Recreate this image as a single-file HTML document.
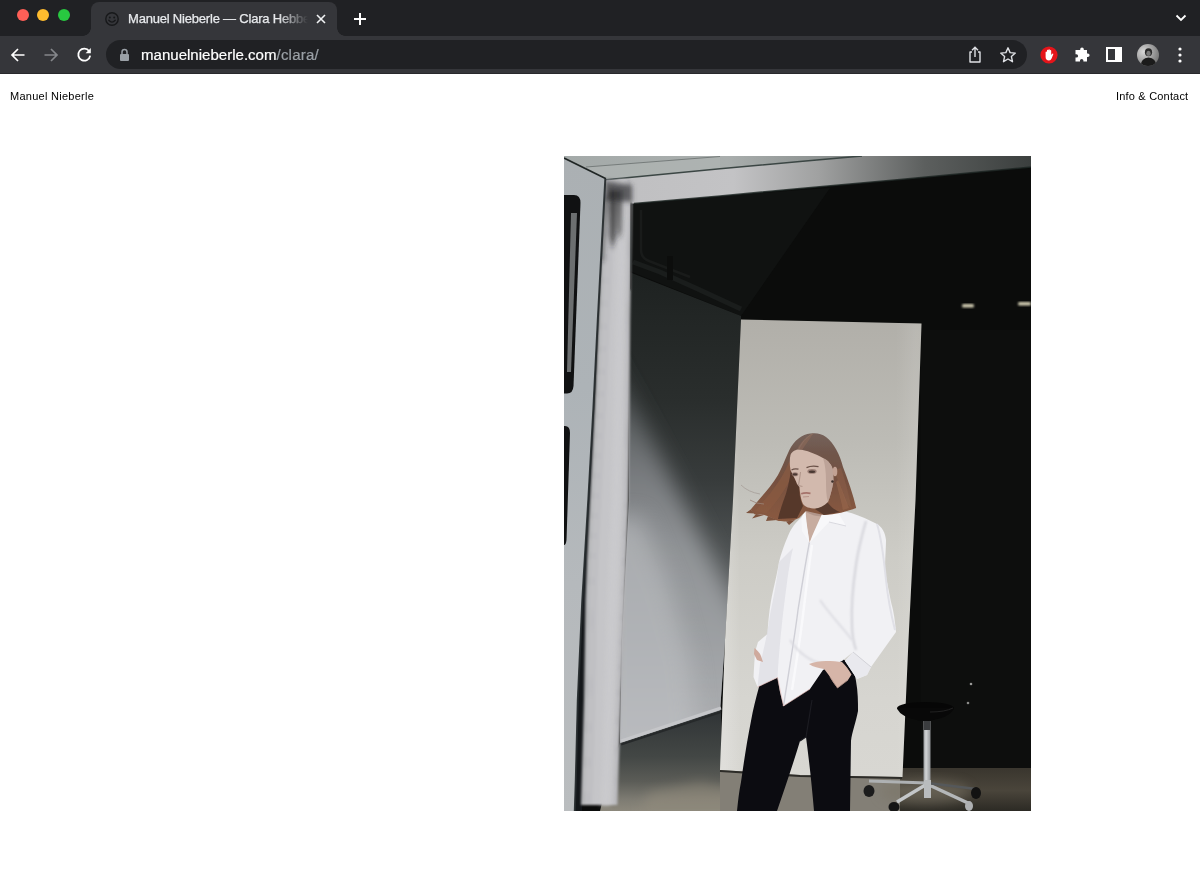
<!DOCTYPE html>
<html lang="en">
<head>
<meta charset="utf-8">
<title>Manuel Nieberle — Clara Hebbel</title>
<style>
html,body{margin:0;padding:0;}
body{width:1200px;height:887px;overflow:hidden;background:#fff;position:relative;font-family:"Liberation Sans",sans-serif;}
#tabstrip{position:absolute;left:0;top:0;width:1200px;height:36px;background:#202124;}
#toolbar{position:absolute;left:0;top:36px;width:1200px;height:37px;background:#35363a;}
#tbline{position:absolute;left:0;top:72.5px;width:1200px;height:1px;background:#28292c;}
.tl{position:absolute;top:9px;width:12px;height:12px;border-radius:50%;}
#tab{position:absolute;left:91px;top:2px;width:246px;height:34px;background:#35363a;border-radius:8px 8px 0 0;}
#tab:before,#tab:after{content:"";position:absolute;bottom:0;width:8px;height:8px;}
#tab:before{left:-8px;background:radial-gradient(circle at 0 0,rgba(0,0,0,0) 7.5px,#35363a 8px);}
#tab:after{right:-8px;background:radial-gradient(circle at 100% 0,rgba(0,0,0,0) 7.5px,#35363a 8px);}
#tabtitle{position:absolute;left:37px;top:8px;width:180px;height:18px;line-height:18px;font-size:13px;color:#e8eaed;white-space:nowrap;overflow:hidden;letter-spacing:-0.2px;-webkit-text-stroke:0.25px #e8eaed;
-webkit-mask-image:linear-gradient(90deg,#000 150px,rgba(0,0,0,0) 180px);mask-image:linear-gradient(90deg,#000 150px,rgba(0,0,0,0) 180px);}
#omni{position:absolute;left:106px;top:40px;width:921px;height:29px;border-radius:15px;background:#202124;}
#url{position:absolute;left:35px;top:4px;height:21px;line-height:21px;font-size:15.05px;color:#fff;white-space:nowrap;-webkit-text-stroke:0.2px #fff;}
#url span{color:#9aa0a6;letter-spacing:0.2px;-webkit-text-stroke:0.2px #9aa0a6;}
svg.ic{position:absolute;overflow:visible;}
#site-l,#site-r,#url,#tabtitle{will-change:transform;}
#site-l{position:absolute;left:10px;top:89px;font-size:11px;letter-spacing:0.27px;line-height:14px;color:#000;white-space:nowrap;}
#site-r{position:absolute;right:11.6px;top:89px;font-size:11px;letter-spacing:0.19px;line-height:14px;color:#000;white-space:nowrap;}
#photo{position:absolute;left:564px;top:156px;width:467px;height:655px;overflow:hidden;}
</style>
</head>
<body>
<div id="tabstrip">
  <div class="tl" style="left:17px;background:#fe5f57;"></div>
  <div class="tl" style="left:37px;background:#febc2e;"></div>
  <div class="tl" style="left:58px;background:#28c840;"></div>
  <div id="tab">
    <svg class="ic" style="left:13px;top:9px" width="16" height="16" viewBox="0 0 16 16"><circle cx="8" cy="8" r="6.2" fill="none" stroke="#17181a" stroke-width="1.4"/><circle cx="5.8" cy="6.4" r="1" fill="#17181a"/><circle cx="10.2" cy="6.4" r="1" fill="#17181a"/><path d="M4.8 9.2 Q8 13 11.2 9.2" fill="none" stroke="#17181a" stroke-width="1.4" stroke-linecap="round"/></svg>
    <div id="tabtitle">Manuel Nieberle — Clara Hebbel</div>
    <svg class="ic" style="left:224px;top:11px" width="12" height="12" viewBox="0 0 12 12"><path d="M2 2 L10 10 M10 2 L2 10" stroke="#f1f3f4" stroke-width="1.6" fill="none"/></svg>
  </div>
  <svg class="ic" style="left:353px;top:12px" width="14" height="14" viewBox="0 0 14 14"><path d="M7 1 V13 M1 7 H13" stroke="#fff" stroke-width="2" fill="none"/></svg>
  <svg class="ic" style="left:1175px;top:14px" width="12" height="8" viewBox="0 0 12 8"><path d="M1.5 1.5 L6 6 L10.5 1.5" stroke="#fff" stroke-width="1.8" fill="none"/></svg>
</div>
<div id="toolbar"></div>
<div id="tbline"></div>
<!-- toolbar icons -->
<svg class="ic" style="left:10px;top:47px" width="16" height="16" viewBox="0 0 16 16"><path d="M14.5 8 H2.5 M8 2 L2 8 L8 14" stroke="#fff" stroke-width="1.7" fill="none"/></svg>
<svg class="ic" style="left:43px;top:47px" width="16" height="16" viewBox="0 0 16 16"><path d="M1.5 8 H13.5 M8 2 L14 8 L8 14" stroke="#85878b" stroke-width="1.7" fill="none"/></svg>
<svg class="ic" style="left:76px;top:46px" width="17" height="17" viewBox="0 0 17 17"><path d="M13.2 5.2 A6 6 0 1 0 14.2 9.6" stroke="#fff" stroke-width="1.8" fill="none"/><path d="M14.8 2 V7.2 H9.6 Z" fill="#fff"/></svg>
<div id="omni">
  <svg class="ic" style="left:13px;top:8px" width="11" height="14" viewBox="0 0 11 14"><rect x="1" y="6" width="9" height="7" rx="1" fill="#9aa0a6"/><path d="M3 6 V4 A2.5 2.5 0 0 1 8 4 V6" fill="none" stroke="#9aa0a6" stroke-width="1.5"/></svg>
  <div id="url">manuelnieberle.com<span>/clara/</span></div>
  <svg class="ic" style="left:862px;top:6px" width="14" height="18" viewBox="0 0 14 18"><path d="M4 6 H2 V16 H12 V6 H10" stroke="#dfe1e5" stroke-width="1.4" fill="none" stroke-linejoin="round"/><path d="M7 11 V1.5 M4 4.2 L7 1.2 L10 4.2" stroke="#dfe1e5" stroke-width="1.4" fill="none"/></svg>
  <svg class="ic" style="left:893px;top:6px" width="18" height="18" viewBox="0 0 18 18"><path d="M9 1.8 L11.1 6.6 L16.3 7.1 L12.4 10.6 L13.5 15.7 L9 13 L4.5 15.7 L5.6 10.6 L1.7 7.1 L6.9 6.6 Z" stroke="#dfe1e5" stroke-width="1.4" fill="none" stroke-linejoin="round"/></svg>
</div>
<svg class="ic" style="left:1040px;top:46px" width="18" height="18" viewBox="0 0 18 18"><circle cx="9" cy="9" r="8.6" fill="#e5141a"/><path d="M5.6 9.2 V6.2 Q5.6 5.4 6.3 5.4 Q7 5.4 7 6.2 V4.6 Q7 3.8 7.7 3.8 Q8.4 3.8 8.4 4.6 V4 Q8.4 3.2 9.1 3.2 Q9.8 3.2 9.8 4 V4.8 Q9.8 4 10.5 4 Q11.2 4 11.2 4.8 V9 L12.3 7.8 Q13 7.2 13.4 7.9 L11.6 12.4 Q10.8 14.4 9 14.4 Q5.6 14.4 5.6 11 Z" fill="#fff"/></svg>
<svg class="ic" style="left:1073px;top:46px" width="18" height="18" viewBox="0 0 18 18"><path d="M7.2 3.2 A1.8 1.8 0 0 1 10.8 3.2 V4 H14 V7.4 H14.8 A1.8 1.8 0 0 1 14.8 11 H14 V15.5 H10.4 V14.6 A1.7 1.7 0 0 0 7 14.6 V15.5 H2.5 V11.6 H3.4 A1.7 1.7 0 0 0 3.4 8.2 H2.5 V4 H7.2 Z" fill="#fff"/></svg>
<svg class="ic" style="left:1106px;top:47px" width="16" height="15" viewBox="0 0 16 15"><rect x="1" y="1" width="14" height="13" fill="none" stroke="#fff" stroke-width="2"/><rect x="9" y="1" width="6" height="13" fill="#fff"/></svg>
<svg class="ic" style="left:1137px;top:44px" width="22" height="22" viewBox="0 0 22 22"><defs><radialGradient id="av" cx="0.3" cy="0.35" r="0.8"><stop offset="0" stop-color="#d8d8d8"/><stop offset="1" stop-color="#6f6f6f"/></radialGradient><clipPath id="avc"><circle cx="11" cy="11" r="11"/></clipPath></defs><circle cx="11" cy="11" r="11" fill="url(#av)"/><g clip-path="url(#avc)"><ellipse cx="11.5" cy="8.2" rx="3.6" ry="4" fill="#2a2a2a"/><ellipse cx="11.5" cy="9.4" rx="2.2" ry="2.6" fill="#7a7a7a"/><path d="M3.5 22 Q4 14 11.5 13.5 Q19 14 19.5 22 Z" fill="#1b1b1b"/></g></svg>
<svg class="ic" style="left:1178px;top:46px" width="4" height="18" viewBox="0 0 4 18"><circle cx="2" cy="3" r="1.6" fill="#fff"/><circle cx="2" cy="9" r="1.6" fill="#fff"/><circle cx="2" cy="15" r="1.6" fill="#fff"/></svg>

<div id="site-l">Manuel Nieberle</div>
<div id="site-r">Info &amp; Contact</div>
<div id="photo">
<svg width="467" height="655" viewBox="564 156 467 655" preserveAspectRatio="none" style="display:block">
<defs>
  <filter id="b05" x="-10%" y="-10%" width="120%" height="120%"><feGaussianBlur stdDeviation="0.45"/></filter>
  <filter id="b1" x="-20%" y="-20%" width="140%" height="140%"><feGaussianBlur stdDeviation="1"/></filter>
  <filter id="b2" x="-20%" y="-20%" width="140%" height="140%"><feGaussianBlur stdDeviation="2.5"/></filter>
  <filter id="b6" x="-30%" y="-30%" width="160%" height="160%"><feGaussianBlur stdDeviation="6"/></filter>
  <filter id="b12" x="-50%" y="-50%" width="200%" height="200%"><feGaussianBlur stdDeviation="11"/></filter>
  <linearGradient id="roofg" x1="564" y1="0" x2="1031" y2="0" gradientUnits="userSpaceOnUse">
    <stop offset="0" stop-color="#a4aaa9"/><stop offset="0.35" stop-color="#a9aead"/><stop offset="0.55" stop-color="#8d9291"/><stop offset="0.8" stop-color="#5a5f5e"/><stop offset="1" stop-color="#3d4241"/>
  </linearGradient>
  <linearGradient id="bandg" x1="606" y1="0" x2="1031" y2="0" gradientUnits="userSpaceOnUse">
    <stop offset="0" stop-color="#bfbfc1"/><stop offset="0.3" stop-color="#c3c3c5"/><stop offset="0.5" stop-color="#a0a1a1"/><stop offset="0.75" stop-color="#5c5f5e"/><stop offset="1" stop-color="#3b3f3e"/>
  </linearGradient>
  <linearGradient id="doorg" x1="0" y1="160" x2="0" y2="811" gradientUnits="userSpaceOnUse">
    <stop offset="0" stop-color="#abb0b3"/><stop offset="0.35" stop-color="#adb3b7"/><stop offset="0.65" stop-color="#b5b9bc"/><stop offset="1" stop-color="#babdbf"/>
  </linearGradient>
  <linearGradient id="curtg" x1="0" y1="0" x2="1" y2="0">
    <stop offset="0" stop-color="#8e9094"/><stop offset="0.25" stop-color="#b4b4b8"/><stop offset="0.55" stop-color="#c4c4c7"/><stop offset="0.85" stop-color="#bcbcbf"/><stop offset="1" stop-color="#a4a4a7"/>
  </linearGradient>
  <linearGradient id="wallg" x1="0" y1="275" x2="0" y2="745" gradientUnits="userSpaceOnUse">
    <stop offset="0" stop-color="#1e2221"/><stop offset="0.27" stop-color="#2a2e2d"/><stop offset="0.44" stop-color="#383c3c"/><stop offset="0.6" stop-color="#4f5354"/><stop offset="0.78" stop-color="#6a6d6f"/><stop offset="1" stop-color="#8a8c8f"/>
  </linearGradient>
  <linearGradient id="wedgeg" x1="0" y1="380" x2="0" y2="745" gradientUnits="userSpaceOnUse">
    <stop offset="0" stop-color="#484c4d"/><stop offset="0.1" stop-color="#5a5e60"/><stop offset="0.25" stop-color="#777a7d"/><stop offset="0.46" stop-color="#909396"/><stop offset="0.7" stop-color="#9c9fa2"/><stop offset="0.9" stop-color="#a9abae"/><stop offset="1" stop-color="#aeb0b3"/>
  </linearGradient>
  <linearGradient id="boardg" x1="0" y1="320" x2="0" y2="776" gradientUnits="userSpaceOnUse">
    <stop offset="0" stop-color="#b1afa9"/><stop offset="0.26" stop-color="#bcbbb5"/><stop offset="0.52" stop-color="#cdccc6"/><stop offset="0.83" stop-color="#d6d5d0"/><stop offset="1" stop-color="#d8d7d2"/>
  </linearGradient>
  <linearGradient id="boardv" x1="725" y1="0" x2="915" y2="0" gradientUnits="userSpaceOnUse">
    <stop offset="0" stop-color="#fff" stop-opacity="0.18"/><stop offset="0.08" stop-color="#fff" stop-opacity="0"/><stop offset="0.9" stop-color="#fff" stop-opacity="0"/><stop offset="1" stop-color="#fff" stop-opacity="0.10"/>
  </linearGradient>
  <linearGradient id="floorL" x1="0" y1="712" x2="0" y2="811" gradientUnits="userSpaceOnUse">
    <stop offset="0" stop-color="#303436"/><stop offset="0.45" stop-color="#434745"/><stop offset="0.7" stop-color="#5b5c57"/><stop offset="0.88" stop-color="#7d7b72"/><stop offset="1" stop-color="#8c887c"/>
  </linearGradient>
  <linearGradient id="floorR" x1="0" y1="770" x2="0" y2="811" gradientUnits="userSpaceOnUse">
    <stop offset="0" stop-color="#3b372f"/><stop offset="0.5" stop-color="#4a453b"/><stop offset="1" stop-color="#2c2a24"/>
  </linearGradient>
  <linearGradient id="hairg" x1="0" y1="433" x2="0" y2="521" gradientUnits="userSpaceOnUse">
    <stop offset="0" stop-color="#75625a"/><stop offset="0.25" stop-color="#6f554a"/><stop offset="0.55" stop-color="#76503f"/><stop offset="0.85" stop-color="#84573f"/><stop offset="1" stop-color="#8a5a41"/>
  </linearGradient>
  <linearGradient id="poleg" x1="922" y1="0" x2="932" y2="0" gradientUnits="userSpaceOnUse">
    <stop offset="0" stop-color="#6d7073"/><stop offset="0.4" stop-color="#d4d6d8"/><stop offset="1" stop-color="#7d8083"/>
  </linearGradient>
  <clipPath id="wallclip"><polygon points="629,272 741,316 741,320 733,500 725,640 720,712 620,745 622,640 629,500"/></clipPath>
  <linearGradient id="curtgL" x1="603" y1="180" x2="631" y2="180" gradientUnits="userSpaceOnUse" gradientTransform="matrix(1 0 -0.0476 1 8.57 0)">
    <stop offset="0" stop-color="#8e9094"/><stop offset="0.22" stop-color="#b2b2b6"/><stop offset="0.55" stop-color="#c4c4c7"/><stop offset="0.85" stop-color="#bebec1"/><stop offset="1" stop-color="#a6a6a9"/>
  </linearGradient>
</defs>
<!-- base: dark interior -->
<rect x="564" y="156" width="467" height="655" fill="#0b0c0b"/>
<!-- subtle lighter dark zone upper-left interior -->
<polygon points="632,203 800,190 830,188 741,316 632,272" fill="#101211"/>
<!-- far right dark panel slightly lighter -->
<rect x="921" y="330" width="110" height="440" fill="#0d0e0d"/>
<!-- dark grey wall left -->
<polygon points="629,272 741,316 741,320 733,500 725,640 720,712 620,745 622,640 629,500" fill="url(#wallg)"/>
<!-- diagonal light patch on wall -->
<g clip-path="url(#wallclip)"><polygon points="590,320 610,358 745,624 760,660 760,780 580,780" fill="url(#wedgeg)" filter="url(#b12)"/></g>
<g clip-path="url(#wallclip)"><polygon points="600,520 640,515 668,580 690,660 700,760 600,760" fill="#c4c6c9" opacity="0.5" filter="url(#b12)"/></g>
<!-- pipes -->
<path d="M633 262 L660 272 L700 290 L741 309" stroke="#1a1d1c" stroke-width="5" fill="none"/>
<path d="M641 210 L641 250 Q641 258 649 261 L690 277" stroke="#191b1a" stroke-width="2.5" fill="none"/>
<rect x="667" y="256" width="6" height="24" fill="#0c0d0c"/>
<!-- floor left -->
<polygon points="620,743 721,710 721,772 740,772 740,811 600,811 610,770" fill="url(#floorL)"/>
<polygon points="650,792 700,782 740,790 740,811 640,811" fill="#958e7e" opacity="0.5" filter="url(#b6)"/>
<!-- baseboard white line -->
<path d="M621 741 L721 708" stroke="#c5c6c9" stroke-width="3" fill="none"/>
<path d="M621 744.500 L721 712" stroke="#26292a" stroke-width="2" fill="none"/>
<!-- floor mid and right -->
<rect x="720" y="768" width="190" height="43" fill="#837f76"/>
<rect x="900" y="768" width="131" height="43" fill="url(#floorR)"/>
<ellipse cx="925" cy="792" rx="45" ry="12" fill="#7a7466" opacity="0.55" filter="url(#b6)"/>
<!-- board -->
<polygon points="741,319.500 921.500,323.500 915.500,500 908.500,640 902.500,777 800,775 720,770 725,640 733,500" fill="url(#boardg)"/>
<polygon points="741,319.500 921.500,323.500 915.500,500 908.500,640 902.500,777 800,775 720,770 725,640 733,500" fill="url(#boardv)"/>
<!-- board bottom shadow -->
<path d="M720 771 L800 776 L902 778" stroke="#2d2c28" stroke-width="2" fill="none"/>
<!-- small lights -->
<rect x="962" y="304" width="12" height="3.500" rx="1.500" fill="#cfcab0" filter="url(#b1)"/>
<rect x="1018" y="302" width="13" height="3.500" rx="1.500" fill="#cfcab0" filter="url(#b1)"/>
<!-- roof -->
<polygon points="564,156 1031,156 1031,167 900,179.500 800,188.500 720,196 634,203.500 606,203 606,179" fill="url(#bandg)"/>
<polygon points="564,156 862,156 800,161.500 720,168.500 606,179.500 564,159" fill="url(#roofg)"/>
<polygon points="586,167 720,156.500 720,168.500 606,179.500" fill="#b0b5b4" opacity="0.6"/>
<path d="M586 167 L720 156.500" stroke="#767c7b" stroke-width="1" fill="none"/>
<path d="M606 179.800 L720 168.800 L800 161.500 L862 156" stroke="#3b4644" stroke-width="1.600" fill="none"/>
<path d="M634 203.500 L720 196 L800 188.500 L900 179.500 L1031 167" stroke="#1d2523" stroke-width="1.500" fill="none" opacity="0.8"/>
<!-- curtain -->
<polygon points="592.0,410.0 587.0,500.0 583.4,560.0 581.0,600.0 576.5,700.0 574.5,780.0 573.5,811.0 582.0,811.0 582.7,780.0 585.0,700.0 586.5,600.0 588.0,560.0 591.0,500.0 595.5,410.0" fill="#14171a"/>
<g filter="url(#b1)">
<polygon points="614.5,180.0 613.5,203.0 611.1,260.0 608.5,320.0 604.5,410.0 600.0,500.0 597.0,560.0 595.5,600.0 594.0,700.0 591.7,780.0 591.0,805.0 612.5,805.0 613.3,780.0 616.0,700.0 620.0,600.0 621.4,560.0 623.5,500.0 624.6,410.0 625.2,320.0 626.1,260.0 627.0,203.0 625.0,180.0" fill="#c5c5c8"/>
<polygon points="604.5,180.0 603.5,203.0 601.1,260.0 598.5,320.0 594.5,410.0 590.0,500.0 587.0,560.0 585.5,600.0 584.0,700.0 581.7,780.0 581.0,805.0 583.6,805.0 584.3,780.0 586.6,700.0 588.1,600.0 589.6,560.0 592.6,500.0 597.1,410.0 601.1,320.0 603.7,260.0 606.1,203.0 607.1,180.0" fill="#b2b3b6"/>
<polygon points="606.5,180.0 605.5,203.0 603.1,260.0 600.5,320.0 596.5,410.0 592.0,500.0 589.0,560.0 587.5,600.0 586.0,700.0 583.7,780.0 583.0,805.0 585.6,805.0 586.3,780.0 588.6,700.0 590.1,600.0 591.6,560.0 594.6,500.0 599.1,410.0 603.1,320.0 605.7,260.0 608.1,203.0 609.1,180.0" fill="#babbbd"/>
<polygon points="608.5,180.0 607.5,203.0 605.1,260.0 602.5,320.0 598.5,410.0 594.0,500.0 591.0,560.0 589.5,600.0 588.0,700.0 585.7,780.0 585.0,805.0 588.6,805.0 589.3,780.0 591.6,700.0 593.1,600.0 594.6,560.0 597.6,500.0 602.1,410.0 606.1,320.0 608.7,260.0 611.1,203.0 612.1,180.0" fill="#c0c0c3"/>
<polygon points="611.5,180.0 610.5,203.0 608.1,260.0 605.5,320.0 601.5,410.0 597.0,500.0 594.0,560.0 592.5,600.0 591.0,700.0 588.7,780.0 588.0,805.0 592.6,805.0 593.3,780.0 595.6,700.0 597.1,600.0 598.6,560.0 601.6,500.0 606.1,410.0 610.1,320.0 612.7,260.0 615.1,203.0 616.1,180.0" fill="#c0c0c3"/>
<polygon points="627.9,180.0 629.9,203.0 629.0,260.0 628.1,320.0 627.5,410.0 626.4,500.0 624.3,560.0 622.9,600.0 618.9,700.0 616.2,780.0 615.4,805.0 617.5,805.0 618.3,780.0 621.0,700.0 625.0,600.0 626.4,560.0 628.5,500.0 629.6,410.0 630.2,320.0 631.1,260.0 632.0,203.0 630.0,180.0" fill="#b0b0b3"/>
<polygon points="625.9,180.0 627.9,203.0 627.0,260.0 626.1,320.0 625.5,410.0 624.4,500.0 622.3,560.0 620.9,600.0 616.9,700.0 614.2,780.0 613.4,805.0 616.0,805.0 616.8,780.0 619.5,700.0 623.5,600.0 624.9,560.0 627.0,500.0 628.1,410.0 628.7,320.0 629.6,260.0 630.5,203.0 628.5,180.0" fill="#bababd"/>
<polygon points="623.4,180.0 625.4,203.0 624.5,260.0 623.6,320.0 623.0,410.0 621.9,500.0 619.8,560.0 618.4,600.0 614.4,700.0 611.7,780.0 610.9,805.0 614.0,805.0 614.8,780.0 617.5,700.0 621.5,600.0 622.9,560.0 625.0,500.0 626.1,410.0 626.7,320.0 627.6,260.0 628.5,203.0 626.5,180.0" fill="#c1c1c4"/>
</g>
<polygon points="618.5,180.0 619.2,203.0 617.6,260.0 615.9,320.0 613.8,410.0 611.2,500.0 608.7,560.0 607.2,600.0 604.4,700.0 601.9,780.0 601.1,805.0 610.2,805.0 611.0,780.0 613.6,700.0 617.1,600.0 618.5,560.0 620.8,500.0 622.5,410.0 623.8,320.0 625.1,260.0 626.3,203.0 624.9,180.0" fill="#cbcbce" opacity="0.8" filter="url(#b2)"/>
<!-- curtain stains top -->
<g filter="url(#b2)">
<polygon points="605,181 632,185 632,202 605,200" fill="#3a3b3c" opacity="0.75"/>
<polygon points="609,190 616,190 615,238 612,250 610,235" fill="#242526" opacity="0.85"/>
<polygon points="617,190 622,190 621,232 619,240 617.500,228" fill="#2b2c2d" opacity="0.8"/>
<polygon points="604,196 607,196 603,262 601,262" fill="#2a2c2d" opacity="0.8"/>
</g>
<path d="M631.500 203 L630.500 290" stroke="#2f3131" stroke-width="3" opacity="0.75" filter="url(#b1)"/>
<!-- door panel -->
<polygon points="564,158 606,178.700 605,180 597.500,320 593,410 588,500 582,600 577.500,700 575.500,780 574.500,811 564,811" fill="url(#doorg)"/>
<path d="M564 158 L606 178.700" stroke="#1f2524" stroke-width="1.600" fill="none"/>
<path d="M605.300 179 L597.800 320 L593.300 410 L588.300 500 L582.300 600 L577.800 700 L575.800 780 L574.800 811" stroke="#262b2e" stroke-width="2" fill="none" opacity="0.9"/>
<!-- door windows -->
<path d="M564 195 L574 195 Q580.500 195 580.500 203 L573.500 386 Q573 393.500 567 393.500 L564 393.500 Z" fill="#101112"/>
<path d="M571 213 L577 213 L571 372 L567 372 Z" fill="#7c8081" opacity="0.85"/>
<path d="M564 426 L565 426 Q570 426 570 433 L566.500 540 Q566 545 564 545 Z" fill="#101112"/>
<!-- stool -->
<ellipse cx="925.500" cy="708" rx="28.500" ry="6" fill="#060606"/>
<path d="M897 708 Q900 718 925 721.500 Q951 718 954 708 Z" fill="#080808"/>
<path d="M930 712 Q945 712 953 708" stroke="#2c2c2c" stroke-width="1" fill="none" opacity="0.7"/>
<rect x="923.500" y="721" width="7" height="63" fill="url(#poleg)"/>
<rect x="924" y="721" width="6" height="9" fill="#3a3c3e"/>
<path d="M927 783 L869 781" stroke="#aeb1b3" stroke-width="3" fill="none"/>
<path d="M927 784 L897 802" stroke="#c3c6c8" stroke-width="3.500" fill="none"/>
<path d="M927 784 L968 803" stroke="#b4b7b9" stroke-width="3.500" fill="none"/>
<path d="M927 783 L976 789" stroke="#55585a" stroke-width="2.500" fill="none"/>
<rect x="924" y="780" width="7" height="18" fill="#b9bcbe"/>
<ellipse cx="869" cy="791" rx="5.500" ry="6" fill="#1c1c1c"/>
<ellipse cx="894" cy="807" rx="5.500" ry="5" fill="#151515"/>
<ellipse cx="969" cy="806" rx="4" ry="5" fill="#aeb0b2"/>
<ellipse cx="976" cy="793" rx="5" ry="6" fill="#121212"/>
<!-- tiny highlights right dark -->
<circle cx="971" cy="684" r="1.300" fill="#9a9a98"/><circle cx="968" cy="703" r="1.300" fill="#8a8a88"/>
<!-- pants -->
<path d="M755 661 L822 665 L843 659 C850 664 855 672 856 681 C858 692 858 702 858 711 C856 722 852 732 851 741 L850 811 L814 811 C812 786 809 760 806 737 L800 741 C793 764 785 788 777 811 L737 811 C738 801 739 792 741 782 C744 761 747 741 751 721 C753 709 756 698 759 687 Z" fill="#0c0c11"/>
<path d="M800 741 L806 737 L812 700" stroke="#1c1c22" stroke-width="1.2" fill="none"/>
<g filter="url(#b05)">
<!-- shirt -->
<path d="M801.400 517.400 C796 522 791 528 788 536 C784 545 781 554 779 562 C777 575 773 590 771 601 C769 612 768 624 767.500 634 L758 642 L755 652 L754 668 L753.500 677 L757.500 687 L777.500 677.500 L780 692 L783.500 706 L810 689 L823 670 L842 661 L853 652 L845 661 L857 679 L867 675 L871 667 L896 632 C895 622 894 612 891 602 C889 592 887 582 885 572 C885 560 886 548 886 540 C885 532 882 527 877 524 C869 520 860 516 852 513.300 L836 509 L822 514 Z" fill="#f1f1f4"/>
<!-- shirt shading -->
<path d="M779 562 C777 580 773 600 770 615 C768 630 764 650 760 664 L757.500 687 L777.500 677.500 C779 650 782 620 786 590 C788 575 790 560 793 548 Z" fill="#dedee4" opacity="0.75"/>
<path d="M809.500 542 C806 560 802 585 798 610 C795 635 789 670 783.500 706" stroke="#cfcfd6" stroke-width="1.400" fill="none"/>
<path d="M812 545 C809 565 806 590 803 615 C800 640 796 665 792 690" stroke="#fafafc" stroke-width="2.500" fill="none" opacity="0.9"/>
<path d="M866 521 C862 535 858 550 856 565 C853 585 851 605 852 625 C852 636 854 644 856 650" stroke="#d4d4da" stroke-width="2.200" fill="none" filter="url(#b1)"/>
<path d="M877 524 C882 540 884 560 886 580 C888 600 892 618 895 630" stroke="#e0e0e6" stroke-width="2" fill="none"/>
<path d="M845 661 L853 652 L871 667 L867 675 L857 679 Z" fill="#e9e9ee"/>
<path d="M853 652 L871 667" stroke="#d2d2d8" stroke-width="1" fill="none"/>
<path d="M820 600 C830 615 845 630 852 640" stroke="#dcdce2" stroke-width="2" fill="none" filter="url(#b1)"/>
<path d="M790 640 C800 655 815 665 830 664" stroke="#dadae0" stroke-width="2" fill="none" filter="url(#b1)"/>
<path d="M757.500 687 L777.500 677.500 L783.500 706 L810 689" stroke="#e3b6b0" stroke-width="0.800" fill="none" opacity="0.8"/>
<!-- neck -->
<path d="M805 503 L825 508 L822 516 C818 526 814 535 809.500 543 C808 533 806 523 805 515 Z" fill="#c7ac9f"/>
<path d="M805 505 C810 510 818 512 824 511 L822 516 C816 517 809 514 805 511 Z" fill="#a88c80" opacity="0.7"/>
<!-- collar -->
<path d="M801.400 517.400 L805.500 510 C806 521 808 532 809.500 543 L802 531 Z" fill="#f6f6f8"/>
<path d="M822 514 L836 509 L846 526 C840 525 834 524 829 522 L809.500 543 C813 533 818 523 822 514 Z" fill="#f8f8fa"/>
<path d="M829 522 L846 526" stroke="#d9d9df" stroke-width="1" fill="none"/>
<!-- hands -->
<path d="M809 664 C814 662 820 661 826 661 C832 661 838 661.500 842 662 C846 666 849 670 851.500 674.500 L848 680 L837.500 688 C835 685 832 681 830 677 C828 674 826 671 824 669 C819 668 813 667 809 664 Z" fill="#d6b5a8"/>
<path d="M830 677 L837.500 688 L848 680" stroke="#b08f84" stroke-width="0.800" fill="none"/>
<path d="M754.500 648 C757 650 760 653 761 656 L763 662 L757 660 L754 654 Z" fill="#cfaa9d"/>
<!-- hair back -->
<path d="M813.600 433.200 C806 433 797 437 791 447 C786 456 784 464 778 475 C771 487 760 498 750.700 509.500 L754.800 514.500 C762 513 770 517 777 520.500 C783 522 792 522 799 518 L806 511 L823.700 515 C835 515 848 511 856.200 508 C853 494 848 480 843 467 C840 455 834 443 826 437 C822 434 818 433 813.600 433.200 Z" fill="url(#hairg)"/>
<path d="M789 462 C785 472 779 482 772 491 C766 499 760 505 755 511 L766 514 C774 505 782 494 788 484 C791 478 792 470 791 464 Z" fill="#8a5b43" opacity="0.7"/>
<path d="M791 468 C790 480 787 492 783 502 C781 508 779 514 778 519 L797 518 L803 506 C800 500 799 492 799 486 L795 480 Z" fill="#4f3328" opacity="0.85"/>
<path d="M834 470 C838 480 842 492 846 503 L852 509 C849 495 845 480 841 468 Z" fill="#8b5f48" opacity="0.6"/>
<path d="M826 500 C829 505 834 510 840 512 L824 515 L815 509 Z" fill="#4e3429" opacity="0.8"/>
<path d="M750.700 509.500 L746 513 L755 513.500 Z M756 514 L752 518.500 L764 515 Z M768 516 L766 521 L777 520 Z M786 521.500 L789 525 L795 520 Z" fill="#7d523c"/>
<path d="M838 480 C842 490 846 500 849 508 L843 510 C841 500 838 490 836 482 Z" fill="#9a694e" opacity="0.55"/>
<path d="M799 449 C801 444 806 437 813 433.500" stroke="#8f7a70" stroke-width="1" fill="none" opacity="0.8"/>
<!-- face -->
<path d="M790.500 455 C792 451 796 449.500 799 449.500 C806 450 816 454 823 458 C828 460 832 465 833 470 L833.500 481 C832 490 830 497 828 502 C824 506 819 508.500 815 508.500 C810 508.500 805 507 803 504 C801 500 800 493 799.500 487 L797 484 C796 480 792 474 790.500 470 C789.500 465 789.500 459 790.500 455 Z" fill="#d2b9ad"/>
<path d="M823 458 C828 460 832 465 833 470 L833.500 481 C832 490 830 497 828 502 C826 496 826 488 826 480 C826 472 825 464 823 458 Z" fill="#b39a8e" opacity="0.7"/>
<path d="M797.400 449 C800 443 806 436 813.600 433.200 C810 439 805 445 802 450 Z" fill="#8d6a5a" opacity="0.6"/>
<ellipse cx="835" cy="471.500" rx="2.300" ry="4.800" fill="#c2a193"/>
<circle cx="832.500" cy="481.500" r="1.300" fill="#3b2e2a"/>
<!-- face features -->
<path d="M791.500 470 C793.500 468.800 796 468.600 798.500 469.200" stroke="#6a5148" stroke-width="1.300" fill="none"/>
<path d="M806.500 467.600 C810 466 814.500 465.800 818.500 466.600" stroke="#6a5148" stroke-width="1.400" fill="none"/>
<ellipse cx="795" cy="474.200" rx="3.200" ry="2" fill="#8d7068" opacity="0.8"/><ellipse cx="795" cy="474.400" rx="2.400" ry="1.100" fill="#4a3833"/>
<ellipse cx="812" cy="471.400" rx="4.600" ry="2.400" fill="#8d7068" opacity="0.8"/><ellipse cx="812" cy="471.700" rx="3.200" ry="1.200" fill="#4a3833"/>
<path d="M800.500 472 C800 477 799 482 798.500 485.500 L802.500 486.500" stroke="#b0968a" stroke-width="1.100" fill="none"/>
<path d="M801.200 493.800 C804 492.800 807.500 492.800 810.500 493.300" stroke="#a5726a" stroke-width="1.700" fill="none"/>
<path d="M803 497 L809 496.500" stroke="#b89489" stroke-width="1" fill="none"/>
<!-- stray hair strands -->
<path d="M741 485 Q748 492 760 494" stroke="#a9a39d" stroke-width="0.900" fill="none"/>
<path d="M750 500 Q756 504 764 504" stroke="#9a8478" stroke-width="0.800" fill="none"/>
</g>
</svg>

</div>
</body>
</html>
